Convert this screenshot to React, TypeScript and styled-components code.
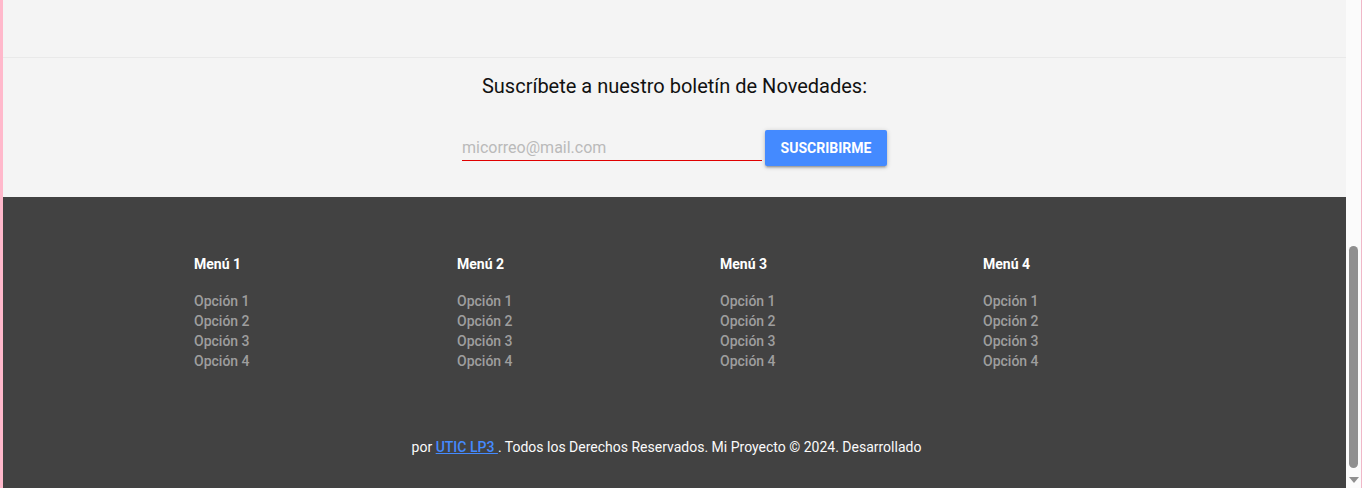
import React from "react";
import styled, { createGlobalStyle } from "styled-components";

const Global = createGlobalStyle`
  html, body { margin: 0; padding: 0; overflow: hidden; }
  body { font-family: Roboto, "Liberation Sans", sans-serif; }
  * { box-sizing: border-box; }
`;

const Frame = styled.div`
  display: flex;
  height: 488px;
  width: 1362px;
  border-left: 3px solid #ffb8cb;
`;

const Main = styled.div`
  flex: 1;
  display: flex;
  flex-direction: column;
  min-width: 0;
`;

const TopBand = styled.div`
  height: 58px;
  background: #f4f4f4;
  border-bottom: 1px solid #e9e9e9;
`;

const Newsletter = styled.section`
  height: 139px;
  background: #f4f4f4;
  display: flex;
  flex-direction: column;
  align-items: center;
  padding-top: 14px;
`;

const Title = styled.h2`
  margin: 0;
  font-size: 20px;
  line-height: 28px;
  font-weight: 400;
  color: #111;
`;

const Form = styled.form`
  display: flex;
  align-items: flex-start;
  gap: 3px;
  margin-top: 30px;
`;

const EmailInput = styled.input`
  width: 300px;
  height: 31px;
  border: none;
  border-bottom: 1px solid #e00000;
  background: transparent;
  font-family: Roboto, "Liberation Sans", sans-serif;
  font-size: 16px;
  padding: 4px 0 0 0;
  outline: none;
  color: #333;
  &::placeholder { color: #bababa; }
`;

const Button = styled.button`
  width: 122px;
  height: 36px;
  border: none;
  border-radius: 2px;
  background: #448aff;
  color: #fff;
  font-family: Roboto, "Liberation Sans", sans-serif;
  font-weight: 700;
  font-size: 14px;
  letter-spacing: 0;
  box-shadow: 0 2px 2px rgba(0,0,0,0.14), 0 3px 1px -2px rgba(0,0,0,0.12), 0 1px 5px rgba(0,0,0,0.2);
`;

const Footer = styled.footer`
  flex: 1;
  background: #424242;
  display: flex;
  flex-direction: column;
  padding-top: 57px;
`;

const MenuGrid = styled.div`
  display: grid;
  grid-template-columns: repeat(4, 263px);
  padding-left: 191px;
`;

const MenuCol = styled.div`
  display: flex;
  flex-direction: column;
`;

const MenuTitle = styled.h5`
  margin: 0 0 17px 0;
  font-size: 14px;
  line-height: 20px;
  font-weight: 700;
  color: #fff;
`;

const Option = styled.a`
  font-size: 14px;
  line-height: 20px;
  font-weight: 500;
  color: #9e9e9e;
  text-decoration: none;
`;

const Copyright = styled.p`
  margin: 66px 0 0 0;
  font-size: 14px;
  line-height: 20px;
  font-weight: 400;
  color: #fafafa;
  text-align: center;
  padding-right: 16px;
`;

const Link = styled.a`
  color: #448aff;
  text-decoration: underline;
  font-weight: 500;
`;

const Scrollbar = styled.div`
  width: 16px;
  background: #fbfbfb;
  border-right: 1px solid #f0b8c8;
  display: flex;
  flex-direction: column;
  align-items: center;
  padding-top: 246px;
`;

const Thumb = styled.div`
  width: 9px;
  height: 222px;
  border-radius: 5px;
  background: #8f8f8f;
`;

const Arrow = styled.div`
  margin-top: 9px;
  width: 0;
  height: 0;
  border-left: 5px solid transparent;
  border-right: 5px solid transparent;
  border-top: 6px solid #8f8f8f;
`;

const menus = [1, 2, 3, 4];
const options = [1, 2, 3, 4];

export default function App() {
  return (
    <>
      <Global />
      <Frame>
        <Main>
          <TopBand />
          <Newsletter>
            <Title>Suscríbete a nuestro boletín de Novedades:</Title>
            <Form onSubmit={(e) => e.preventDefault()}>
              <EmailInput type="email" placeholder="micorreo@mail.com" />
              <Button type="submit">SUSCRIBIRME</Button>
            </Form>
          </Newsletter>
          <Footer>
            <MenuGrid>
              {menus.map((m) => (
                <MenuCol key={m}>
                  <MenuTitle>Menú {m}</MenuTitle>
                  {options.map((o) => (
                    <Option key={o} href="#">Opción {o}</Option>
                  ))}
                </MenuCol>
              ))}
            </MenuGrid>
            <Copyright>
              por <Link href="#">UTIC LP3 </Link>. Todos los Derechos Reservados. Mi Proyecto © 2024. Desarrollado
            </Copyright>
          </Footer>
        </Main>
        <Scrollbar>
          <Thumb />
          <Arrow />
        </Scrollbar>
      </Frame>
    </>
  );
}
